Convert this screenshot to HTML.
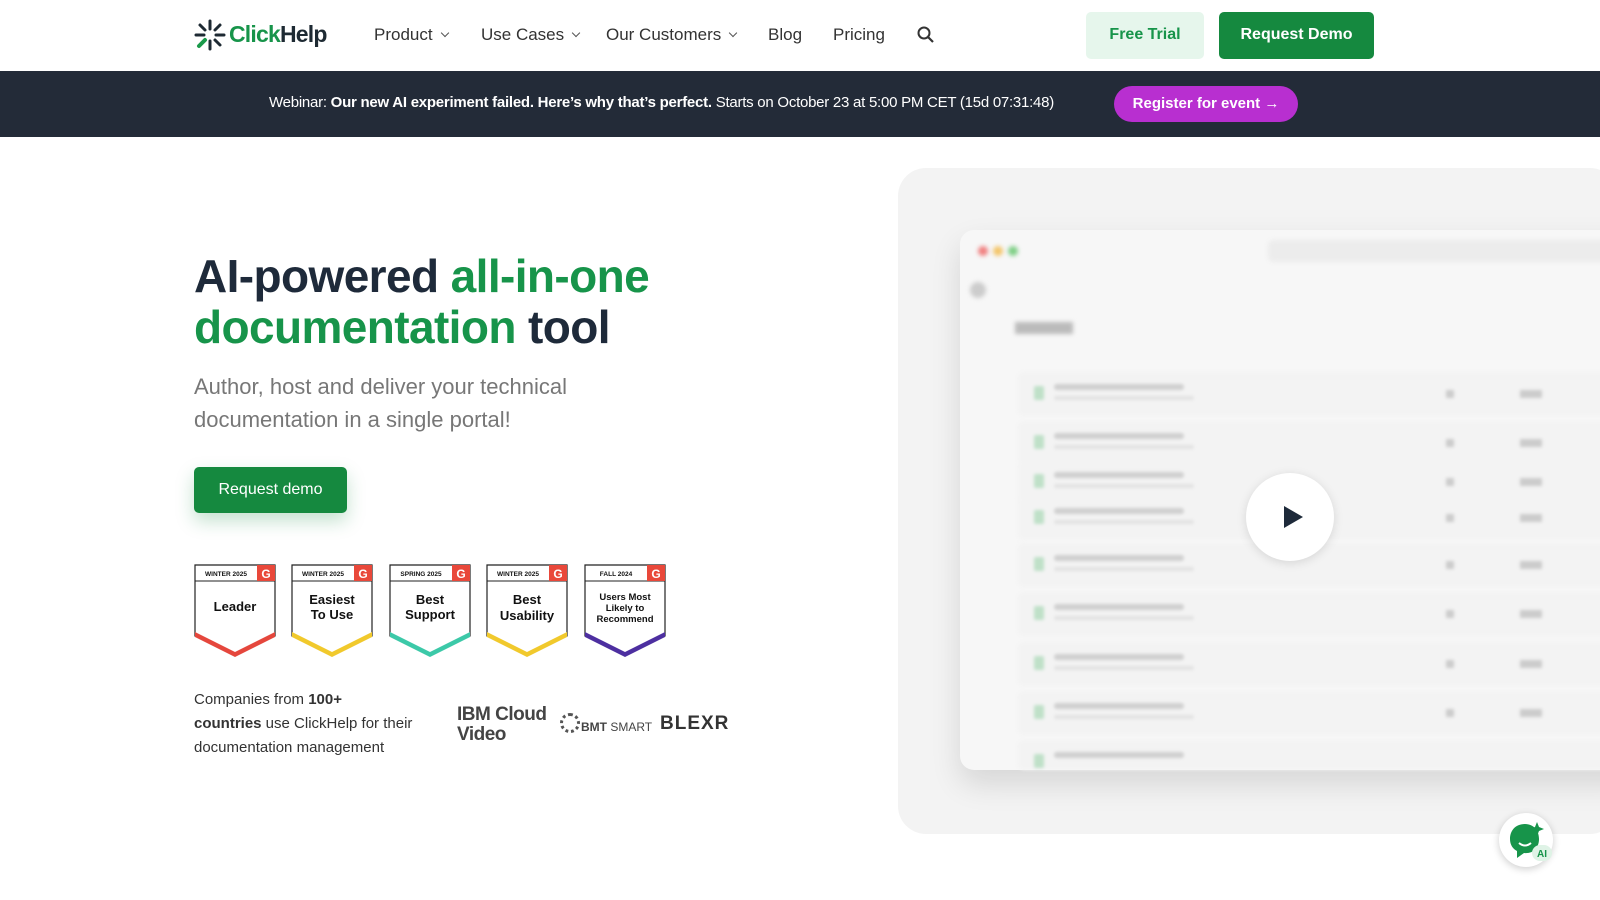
<!DOCTYPE html>
<html><head><meta charset="utf-8"><style>
*{margin:0;padding:0;box-sizing:border-box}
body{width:1600px;height:900px;overflow:hidden;background:#fff;font-family:"Liberation Sans",sans-serif;color:#222;position:relative}
.abs{position:absolute}
.nav a{position:absolute;top:25px;font-size:17px;color:#333;white-space:nowrap}
.chev{display:inline-block;width:6px;height:6px;border-right:1.5px solid #555;border-bottom:1.5px solid #555;transform:rotate(45deg);margin-left:9px;position:relative;top:-4px}
.row{position:absolute;left:1018px;width:600px;height:44px;background:#f3f3f3;border-radius:6px}
.row i{position:absolute;left:16px;top:14px;width:10px;height:14px;background:#bfe0c8;border-radius:2px}
.row b{position:absolute;left:36px;top:12px;width:130px;height:6px;background:#cfcfcf;border-radius:3px}
.row s{position:absolute;left:36px;top:24px;width:140px;height:4px;background:#e2e2e2;border-radius:2px}
.row u{position:absolute;left:428px;top:18px;width:8px;height:8px;background:#ccc}
.row em{position:absolute;left:502px;top:18px;width:22px;height:8px;background:#ccc}
</style></head><body>
<svg class="abs" style="left:194px;top:19px" width="32" height="32" viewBox="0 0 32 32">
<g stroke="#1e2a33" stroke-width="3" stroke-linecap="round">
<line x1="16" y1="2" x2="16" y2="10"/><line x1="2" y1="16" x2="10" y2="16"/><line x1="30" y1="16" x2="22" y2="16"/><line x1="16" y1="30" x2="16" y2="22"/>
<line x1="6" y1="6" x2="11" y2="11"/><line x1="26" y1="6" x2="21" y2="11"/><line x1="26" y1="26" x2="21" y2="21"/></g>
<line x1="5" y1="27" x2="11" y2="21" stroke="#1a9a4a" stroke-width="4" stroke-linecap="round"/></svg>
<div class="abs" style="left:229px;top:21px;font-size:23px;font-weight:bold;letter-spacing:-0.8px"><span style="color:#17944a">Click</span><span style="color:#1e2a33">Help</span></div>
<div class="nav">
<a style="left:374px">Product<span class="chev"></span></a>
<a style="left:481px">Use Cases<span class="chev"></span></a>
<a style="left:606px">Our Customers<span class="chev"></span></a>
<a style="left:768px">Blog</a>
<a style="left:833px">Pricing</a>
</div>
<svg class="abs" style="left:917px;top:26px" width="18" height="18" viewBox="0 0 18 18"><circle cx="7" cy="7" r="5.5" fill="none" stroke="#333" stroke-width="2"/><line x1="11" y1="11" x2="16" y2="16" stroke="#333" stroke-width="2.2"/></svg>
<div class="abs" style="left:1086px;top:12px;width:118px;height:47px;background:#e6f6ec;border-radius:5px;color:#17944a;font-size:16px;font-weight:bold;text-align:center;line-height:45px">Free Trial</div>
<div class="abs" style="left:1219px;top:12px;width:155px;height:47px;background:#15893f;border-radius:5px;color:#fff;font-size:16px;font-weight:bold;text-align:center;line-height:45px">Request Demo</div>
<div class="abs" style="left:0;top:71px;width:1600px;height:66px;background:#232b38"></div>
<div class="abs" style="left:269px;top:94px;width:830px;font-size:15px;color:#fff;white-space:nowrap;letter-spacing:-0.25px">Webinar: <b>Our new AI experiment failed. Here’s why that’s perfect.</b> Starts on October 23 at 5:00 PM CET (15d 07:31:48)</div>
<div class="abs" style="left:1114px;top:86px;width:184px;height:36px;background:#b82fd0;border-radius:18px;color:#fff;font-size:15px;font-weight:bold;text-align:center;line-height:35px">Register for event →</div>
<div class="abs" style="left:194px;top:251px;font-size:46px;font-weight:bold;line-height:51px;color:#1e2a3a;letter-spacing:-0.6px">AI-powered <span style="color:#17944a">all-in-one</span><br><span style="color:#17944a">documentation</span> tool</div>
<div class="abs" style="left:194px;top:370px;font-size:22px;line-height:33px;color:#777">Author, host and deliver your technical<br>documentation in a single portal!</div>
<div class="abs" style="left:194px;top:467px;width:153px;height:46px;background:#15893f;border-radius:5px;color:#fff;font-size:16px;text-align:center;line-height:45px;box-shadow:0 8px 18px rgba(21,137,63,.25)">Request demo</div>
<svg class="abs" style="left:194px;top:564px" width="475" height="96" viewBox="0 0 475 96">
<defs><g id="b"><path d="M1 1H81V72L41 92L1 72Z" fill="#fff" stroke="#222" stroke-width="1.2"/><line x1="1" y1="17" x2="81" y2="17" stroke="#222" stroke-width="1"/><rect x="63" y="1" width="18" height="16" fill="#e9483a"/><text x="72" y="14" font-size="12" font-weight="bold" fill="#fff" text-anchor="middle" font-family="Liberation Sans">G</text></g></defs>
<g font-family="Liberation Sans" font-weight="bold" fill="#111" text-anchor="middle">
<use href="#b"/><path d="M1 68L41 88L81 68V73L41 93L1 73Z" fill="#e5473d"/><text x="32" y="12" font-size="6.5">WINTER 2025</text><text x="41" y="47" font-size="13">Leader</text>
<g transform="translate(97,0)"><use href="#b"/><path d="M1 68L41 88L81 68V73L41 93L1 73Z" fill="#f1c92c"/><text x="32" y="12" font-size="6.5">WINTER 2025</text><text x="41" y="40" font-size="13">Easiest</text><text x="41" y="55" font-size="13">To Use</text></g>
<g transform="translate(195,0)"><use href="#b"/><path d="M1 68L41 88L81 68V73L41 93L1 73Z" fill="#3cc9a8"/><text x="32" y="12" font-size="6.5">SPRING 2025</text><text x="41" y="40" font-size="13">Best</text><text x="41" y="55" font-size="13">Support</text></g>
<g transform="translate(292,0)"><use href="#b"/><path d="M1 68L41 88L81 68V73L41 93L1 73Z" fill="#f1c92c"/><text x="32" y="12" font-size="6.5">WINTER 2025</text><text x="41" y="40" font-size="13">Best</text><text x="41" y="56" font-size="13">Usability</text></g>
<g transform="translate(390,0)"><use href="#b"/><path d="M1 68L41 88L81 68V73L41 93L1 73Z" fill="#4d2fa0"/><text x="32" y="12" font-size="6.5">FALL 2024</text><text x="41" y="36" font-size="9.5">Users Most</text><text x="41" y="47" font-size="9.5">Likely to</text><text x="41" y="58" font-size="9.5">Recommend</text></g>
</g></svg>
<div class="abs" style="left:194px;top:688px;font-size:15px;line-height:24px;color:#333">Companies from <b>100+</b><br><b>countries</b> use ClickHelp for their<br>documentation management</div>
<div class="abs" style="left:457px;top:705px;font-size:19px;font-weight:bold;line-height:20px;color:#444;letter-spacing:-0.5px">IBM Cloud<br>Video</div>
<div class="abs" style="left:560px;top:713px;width:20px;height:20px;border-radius:50%;border:3px dotted #555"></div>
<div class="abs" style="left:581px;top:720px;font-size:12px;color:#444"><b>BMT</b> SMART</div>
<div class="abs" style="left:660px;top:713px;font-size:19px;font-weight:bold;color:#333;letter-spacing:1px">BLEXR</div>
<div class="abs" style="left:898px;top:168px;width:720px;height:666px;background:#f3f3f3;border-radius:28px;overflow:hidden">
<div class="abs" style="left:62px;top:62px;width:680px;height:540px;background:#f7f7f7;border-radius:14px;box-shadow:0 14px 30px rgba(0,0,0,.12);overflow:hidden">
<div style="filter:blur(2px)">
<div class="abs" style="left:18px;top:16px;width:10px;height:10px;border-radius:50%;background:#f08080"></div>
<div class="abs" style="left:33px;top:16px;width:10px;height:10px;border-radius:50%;background:#f3c56a"></div>
<div class="abs" style="left:48px;top:16px;width:10px;height:10px;border-radius:50%;background:#7fcf86"></div>
<div class="abs" style="left:308px;top:10px;width:380px;height:22px;background:#ececec;border-radius:6px"></div>
<div class="abs" style="left:10px;top:52px;width:16px;height:16px;border-radius:50%;background:#ccc"></div>
<div class="abs" style="left:55px;top:92px;width:58px;height:12px;background:#bbb"></div>
</div></div>
<div style="filter:blur(1.5px)">
<div class="row" style="top:204px;left:120px"><i></i><b></b><s></s><u></u><em></em></div>
<div class="row" style="top:253px;left:120px"><i></i><b></b><s></s><u></u><em></em></div>
<div class="row" style="top:292px;left:120px"><i></i><b></b><s></s><u></u><em></em></div>
<div class="row" style="top:328px;left:120px"><i></i><b></b><s></s><u></u><em></em></div>
<div class="row" style="top:375px;left:120px"><i></i><b></b><s></s><u></u><em></em></div>
<div class="row" style="top:424px;left:120px"><i></i><b></b><s></s><u></u><em></em></div>
<div class="row" style="top:474px;left:120px"><i></i><b></b><s></s><u></u><em></em></div>
<div class="row" style="top:523px;left:120px"><i></i><b></b><s></s><u></u><em></em></div>
<div class="row" style="top:572px;left:120px;height:30px"><i></i><b></b></div>
</div>
<div class="abs" style="left:348px;top:305px;width:88px;height:88px;border-radius:50%;background:#fff;box-shadow:0 2px 10px rgba(0,0,0,.12)"></div>
<svg class="abs" style="left:384px;top:337px" width="22" height="24" viewBox="0 0 22 24"><path d="M2 1L21 12L2 23Z" fill="#1e2a3a"/></svg>
</div>
<div class="abs" style="left:1499px;top:813px;width:54px;height:54px;border-radius:50%;background:#fff;box-shadow:0 2px 8px rgba(0,0,0,.2)"></div>
<svg class="abs" style="left:1505px;top:818px" width="50" height="50" viewBox="0 0 50 50"><path d="M20 6C10 6 5 13 5 21C5 27 8 31 12 33V40L19 35C28 36 34 30 34 21C34 13 29 6 20 6Z" fill="#17944a"/><path d="M14 25Q20 30 26 25" stroke="#fff" stroke-width="2" fill="none"/><path d="M32 4L34 9L39 11L34 13L32 18L30 13L25 11L30 9Z" fill="#17944a"/><rect x="27" y="27" width="20" height="16" rx="8" fill="#dff3e6"/><text x="37" y="39" font-size="10" font-weight="bold" fill="#17944a" text-anchor="middle" font-family="Liberation Sans">AI</text></svg>
</body></html>
